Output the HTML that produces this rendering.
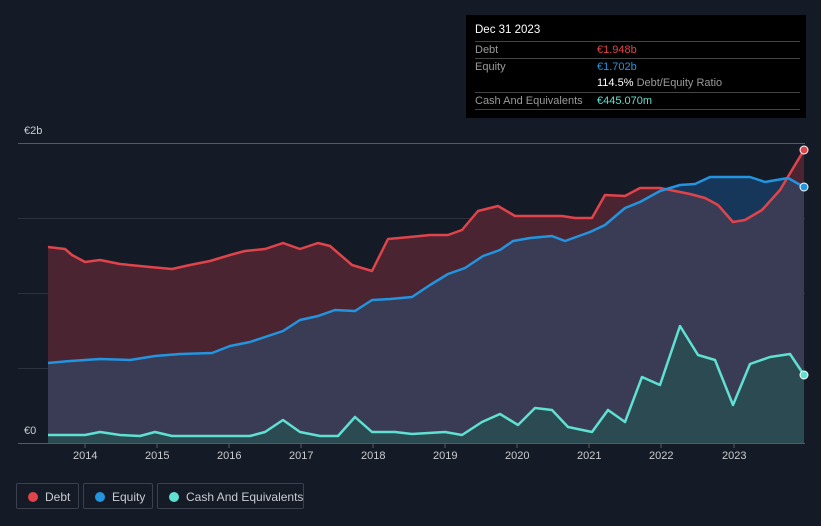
<!DOCTYPE html>
<html><head><meta charset="utf-8"><style>
html,body{margin:0;width:821px;height:526px;overflow:hidden}
body{background:#151b26;font-family:"Liberation Sans",sans-serif;position:relative}
.tip{position:absolute;left:466px;top:15px;width:340px;height:103px;background:#000;color:#fff;font-size:11px}
.tip .h{position:absolute;left:9px;top:9px;font-size:11.5px}
.row{position:absolute;left:9px;width:325px;height:17px;border-top:1px solid #444;line-height:17px}
.row span.l{color:#9a9a9a}
.row span.v{position:absolute;left:122px;white-space:nowrap}
.leg{position:absolute;top:483px;height:26px;border:1px solid #3a404c;border-radius:2px;color:#c8cbd0;font-size:12px;line-height:26px;box-sizing:border-box;white-space:nowrap}
.leg i{position:absolute;left:11px;top:8px;width:10px;height:10px;border-radius:50%}
.ax{position:absolute;color:#c8cbd0;font-size:11px}
</style></head><body>
<svg width="821" height="526" style="position:absolute;left:0;top:0">
<defs><clipPath id="dc"><path d="M48 247L65 249L72 255L85 262L100 260L120 264L150 267L172 269L190 265L210 261L230 255L245 251L265 249L283 243L300 249L318 243L330 246L352 265L372 271L388 239L410 237L430 235L448 235L462 230L478 211L498 206L515 216L540 216L562 216L575 218L592 218L605 195L625 196L640 188L660 188L675 191L690 194L705 198L718 205L733 222L745 220L762 210L780 190L804 150L804 443L48 443Z"/></clipPath></defs>
<g stroke="#2c323e" stroke-width="1"><line x1="18" y1="143.5" x2="805" y2="143.5" stroke="#555b66"/><line x1="18" y1="218.5" x2="805" y2="218.5"/><line x1="18" y1="293.5" x2="805" y2="293.5"/><line x1="18" y1="368.5" x2="805" y2="368.5"/><line x1="18" y1="443.5" x2="805" y2="443.5" stroke="#555b66"/></g>
<path fill="#17375a" d="M48 363L70 361L100 359L130 360L155 356L180 354L212 353L230 346L250 342L265 337L283 331L300 320L318 316L335 310L355 311L372 300L390 299L412 297L430 285L448 274L465 268L483 256L500 250L513 241L530 238L552 236L565 241L590 232L605 225L625 208L640 202L660 191L680 185L695 184L710 177L750 177L765 182L788 178L804 187L804 443L48 443Z"/>
<path fill="#4a2430" d="M48 247L65 249L72 255L85 262L100 260L120 264L150 267L172 269L190 265L210 261L230 255L245 251L265 249L283 243L300 249L318 243L330 246L352 265L372 271L388 239L410 237L430 235L448 235L462 230L478 211L498 206L515 216L540 216L562 216L575 218L592 218L605 195L625 196L640 188L660 188L675 191L690 194L705 198L718 205L733 222L745 220L762 210L780 190L804 150L804 443L48 443Z"/>
<path clip-path="url(#dc)" fill="#3a3c56" d="M48 363L70 361L100 359L130 360L155 356L180 354L212 353L230 346L250 342L265 337L283 331L300 320L318 316L335 310L355 311L372 300L390 299L412 297L430 285L448 274L465 268L483 256L500 250L513 241L530 238L552 236L565 241L590 232L605 225L625 208L640 202L660 191L680 185L695 184L710 177L750 177L765 182L788 178L804 187L804 443L48 443Z"/>
<path fill="#2c4a52" d="M48 435L85 435L100 432L120 435L140 436L155 432L172 436L210 436L250 436L265 432L283 420L300 432L320 436L338 436L355 417L372 432L395 432L412 434L445 432L462 435L482 422L500 414L518 425L535 408L552 410L568 427L592 432L608 410L625 422L642 377L660 385L680 326L698 355L715 360L733 405L750 364L770 357L790 354L804 375L804 443L48 443Z"/>
<g fill="none" stroke-width="2.5" stroke-linejoin="round">
<path stroke="#e0434a" d="M48 247L65 249L72 255L85 262L100 260L120 264L150 267L172 269L190 265L210 261L230 255L245 251L265 249L283 243L300 249L318 243L330 246L352 265L372 271L388 239L410 237L430 235L448 235L462 230L478 211L498 206L515 216L540 216L562 216L575 218L592 218L605 195L625 196L640 188L660 188L675 191L690 194L705 198L718 205L733 222L745 220L762 210L780 190L804 150"/>
<path stroke="#2394df" d="M48 363L70 361L100 359L130 360L155 356L180 354L212 353L230 346L250 342L265 337L283 331L300 320L318 316L335 310L355 311L372 300L390 299L412 297L430 285L448 274L465 268L483 256L500 250L513 241L530 238L552 236L565 241L590 232L605 225L625 208L640 202L660 191L680 185L695 184L710 177L750 177L765 182L788 178L804 187"/>
<path stroke="#5fe0d0" d="M48 435L85 435L100 432L120 435L140 436L155 432L172 436L210 436L250 436L265 432L283 420L300 432L320 436L338 436L355 417L372 432L395 432L412 434L445 432L462 435L482 422L500 414L518 425L535 408L552 410L568 427L592 432L608 410L625 422L642 377L660 385L680 326L698 355L715 360L733 405L750 364L770 357L790 354L804 375"/>
</g>
<circle cx="804" cy="150" r="4" fill="#e0434a" stroke="#fff" stroke-width="1"/>
<circle cx="804" cy="187" r="4" fill="#2394df" stroke="#fff" stroke-width="1"/>
<circle cx="804" cy="375" r="4" fill="#5fe0d0" stroke="#fff" stroke-width="1"/>
<g stroke="#555b66"><line x1="85" y1="443" x2="85" y2="448"/><line x1="157" y1="443" x2="157" y2="448"/><line x1="229" y1="443" x2="229" y2="448"/><line x1="301" y1="443" x2="301" y2="448"/><line x1="373" y1="443" x2="373" y2="448"/><line x1="445" y1="443" x2="445" y2="448"/><line x1="517" y1="443" x2="517" y2="448"/><line x1="589" y1="443" x2="589" y2="448"/><line x1="661" y1="443" x2="661" y2="448"/><line x1="734" y1="443" x2="734" y2="448"/></g>
</svg>
<div class="ax" style="left:24px;top:125px">€2b</div>
<div class="ax" style="left:24px;top:425px">€0</div>
<div class="ax" style="left:73px;top:450px">2014</div><div class="ax" style="left:145px;top:450px">2015</div><div class="ax" style="left:217px;top:450px">2016</div><div class="ax" style="left:289px;top:450px">2017</div><div class="ax" style="left:361px;top:450px">2018</div><div class="ax" style="left:433px;top:450px">2019</div><div class="ax" style="left:505px;top:450px">2020</div><div class="ax" style="left:577px;top:450px">2021</div><div class="ax" style="left:649px;top:450px">2022</div><div class="ax" style="left:722px;top:450px">2023</div>
<div class="tip"><div class="h">Dec 31 2023</div>
<div class="row" style="top:26px"><span class="l">Debt</span><span class="v" style="color:#e0434a">€1.948b</span></div>
<div class="row" style="top:43px"><span class="l">Equity</span><span class="v" style="color:#2394df">€1.702b</span></div>
<div class="row" style="top:60px;border-top:none"><span class="v">114.5% <span style="color:#9a9a9a">Debt/Equity Ratio</span></span></div>
<div class="row" style="top:77px"><span class="l">Cash And Equivalents</span><span class="v" style="color:#5fe0d0">€445.070m</span></div>
<div class="row" style="top:94px;height:0"></div>
</div>
<div class="leg" style="left:16px;width:63px"><i style="background:#e0434a"></i><span style="position:absolute;left:28px">Debt</span></div>
<div class="leg" style="left:83px;width:70px"><i style="background:#2394df"></i><span style="position:absolute;left:28px">Equity</span></div>
<div class="leg" style="left:157px;width:147px"><i style="background:#5fe0d0"></i><span style="position:absolute;left:28px">Cash And Equivalents</span></div>
</body></html>
